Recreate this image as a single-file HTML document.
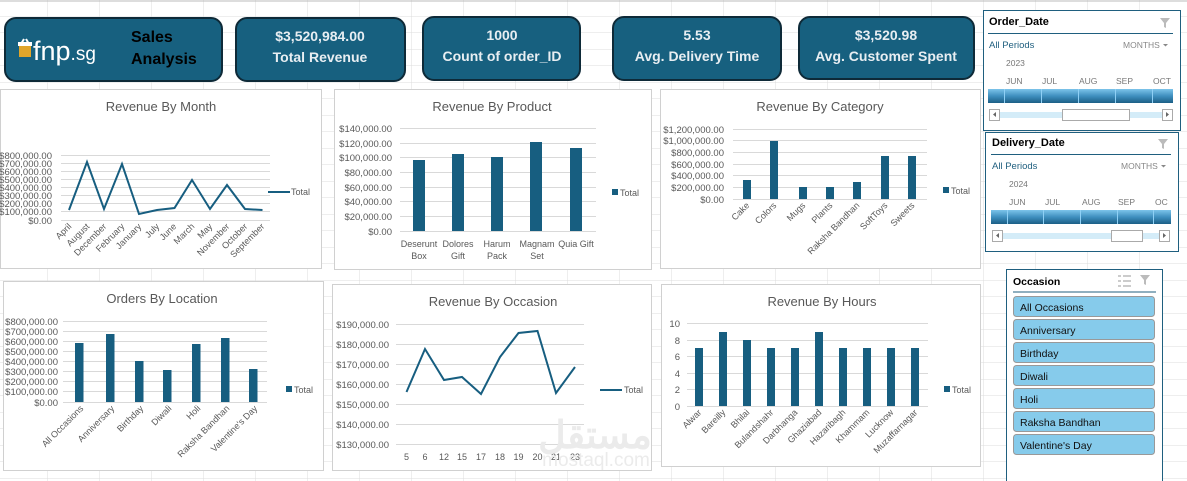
<!DOCTYPE html>
<html><head><meta charset="utf-8"><style>
html,body{margin:0;padding:0;background:#fff}
svg{display:block}
text{font-family:"Liberation Sans",sans-serif}
</style></head><body>
<svg width="1187" height="481" viewBox="0 0 1187 481" xmlns="http://www.w3.org/2000/svg">
<defs>
<pattern id="grid" x="-4" y="0" width="52" height="16.5" patternUnits="userSpaceOnUse">
<path d="M52 0V16.5M0 16.5H52" stroke="#dcdcdc" stroke-width="1" fill="none"/>
</pattern>
<linearGradient id="tl" x1="0" y1="0" x2="0" y2="1">
<stop offset="0" stop-color="#7cc4ea"/><stop offset="0.5" stop-color="#3f8fbf"/><stop offset="1" stop-color="#1c5f86"/>
</linearGradient>
</defs>
<rect width="1187" height="481" fill="#fff"/>
<rect width="1187" height="481" fill="url(#grid)"/>
<line x1="0" y1="1" x2="1187" y2="1" stroke="#bbb"/>

<g stroke="#0e2a38" stroke-width="2" fill="#17607f">
<rect x="5" y="18" width="217" height="63" rx="11"/>
<rect x="236" y="18" width="169" height="63" rx="11"/>
<rect x="423" y="17" width="157" height="63" rx="11"/>
<rect x="613" y="17" width="168" height="63" rx="11"/>
<rect x="799" y="17" width="175" height="62" rx="11"/>
</g>
<rect x="19" y="45" width="12" height="12" fill="#e0a52a"/>
<path d="M21 44l3-5M29 44l-3-5" stroke="#fff" stroke-width="2"/>
<rect x="18" y="42" width="14" height="4" fill="#fff"/>
<text x="33" y="60" font-size="27" fill="#fff" font-family="Liberation Sans">fnp<tspan font-size="19">.sg</tspan></text>
<text x="131" y="42" font-size="16" font-weight="bold" fill="#000" font-family="DejaVu Sans,sans-serif">Sales</text>
<text x="131" y="64" font-size="16" font-weight="bold" fill="#000" font-family="DejaVu Sans,sans-serif">Analysis</text>
<g fill="#e8eef2" font-weight="bold" font-size="14" text-anchor="middle">
<text x="320" y="41">$3,520,984.00</text><text x="320" y="62">Total Revenue</text>
<text x="502" y="40">1000</text><text x="502" y="61">Count of order_ID</text>
<text x="697" y="40">5.53</text><text x="697" y="61">Avg. Delivery Time</text>
<text x="886" y="40">$3,520.98</text><text x="886" y="61">Avg. Customer Spent</text>
</g>

<g fill="#fff" stroke="#d0d0d0">
<rect x="0.5" y="89.5" width="321" height="179"/>
<rect x="334.5" y="89.5" width="317" height="180"/>
<rect x="660.5" y="89.5" width="320" height="179"/>
<rect x="3.5" y="281.5" width="320" height="189"/>
<rect x="332.5" y="284.5" width="319" height="186"/>
<rect x="661.5" y="284.5" width="319" height="182"/>
</g>
<g fill="#595959" font-size="13" text-anchor="middle">
<text x="161" y="111">Revenue By Month</text>
<text x="492" y="111">Revenue By Product</text>
<text x="820" y="111">Revenue By Category</text>
<text x="162" y="303">Orders By Location</text>
<text x="493" y="306">Revenue By Occasion</text>
<text x="822" y="306">Revenue By Hours</text>
</g>

<g stroke="#d9d9d9">
<path d="M61 155.5H270M61 163.5H270M61 171.5H270M61 179.5H270M61 187.5H270M61 195.5H270M61 203.5H270M61 211.5H270M61 220.5H270"/>
</g>
<g fill="#595959" font-size="9.5" text-anchor="end">
<text x="52" y="159">$800,000.00</text><text x="52" y="167">$700,000.00</text><text x="52" y="175">$600,000.00</text><text x="52" y="183">$500,000.00</text><text x="52" y="191">$400,000.00</text><text x="52" y="199">$300,000.00</text><text x="52" y="207">$200,000.00</text><text x="52" y="215">$100,000.00</text><text x="52" y="224">$0.00</text>
</g>
<polyline fill="none" stroke="#175e80" stroke-width="2" points="69,210 87,162 104,209 122,164 139,214 157,210 174.5,208 192,180 210,209 227,185 245,209 262.5,210"/>
<line x1="268" y1="192" x2="290" y2="192" stroke="#175e80" stroke-width="2"/>
<text x="291" y="195" font-size="9" fill="#595959">Total</text>
<g fill="#595959" font-size="9" text-anchor="end">
<text transform="translate(72,227) rotate(-45)">April</text>
<text transform="translate(90,227) rotate(-45)">August</text>
<text transform="translate(107,227) rotate(-45)">December</text>
<text transform="translate(125,227) rotate(-45)">February</text>
<text transform="translate(142,227) rotate(-45)">January</text>
<text transform="translate(160,227) rotate(-45)">July</text>
<text transform="translate(177,227) rotate(-45)">June</text>
<text transform="translate(195,227) rotate(-45)">March</text>
<text transform="translate(213,227) rotate(-45)">May</text>
<text transform="translate(230,227) rotate(-45)">November</text>
<text transform="translate(248,227) rotate(-45)">October</text>
<text transform="translate(265,227) rotate(-45)">September</text>
</g>

<g stroke="#d9d9d9">
<path d="M400 128.5H596M400 143.5H596M400 157.5H596M400 172.5H596M400 187.5H596M400 201.5H596M400 216.5H596M400 231.5H596"/>
</g>
<g fill="#595959" font-size="9.5" text-anchor="end">
<text x="392" y="132">$140,000.00</text><text x="392" y="147">$120,000.00</text><text x="392" y="161">$100,000.00</text><text x="392" y="176">$80,000.00</text><text x="392" y="191">$60,000.00</text><text x="392" y="205">$40,000.00</text><text x="392" y="220">$20,000.00</text><text x="392" y="235">$0.00</text>
</g>
<g fill="#175e80">
<rect x="413" y="160" width="12" height="71"/>
<rect x="452" y="154" width="12" height="77"/>
<rect x="491" y="157" width="12" height="74"/>
<rect x="530" y="142" width="12" height="89"/>
<rect x="570" y="148" width="12" height="83"/>
<rect x="612" y="189" width="6" height="6"/>
</g>
<text x="620" y="196" font-size="9" fill="#595959">Total</text>
<g fill="#595959" font-size="9" text-anchor="middle">
<text x="419" y="247">Deserunt</text><text x="419" y="259">Box</text>
<text x="458" y="247">Dolores</text><text x="458" y="259">Gift</text>
<text x="497" y="247">Harum</text><text x="497" y="259">Pack</text>
<text x="537" y="247">Magnam</text><text x="537" y="259">Set</text>
<text x="576" y="247">Quia Gift</text>
</g>

<g stroke="#d9d9d9">
<path d="M733 129.5H927M733 140.5H927M733 152.5H927M733 164.5H927M733 175.5H927M733 187.5H927M733 199.5H927"/>
</g>
<g fill="#595959" font-size="9.5" text-anchor="end">
<text x="724" y="133">$1,200,000.00</text><text x="724" y="144">$1,000,000.00</text><text x="724" y="156">$800,000.00</text><text x="724" y="168">$600,000.00</text><text x="724" y="179">$400,000.00</text><text x="724" y="191">$200,000.00</text><text x="724" y="203">$0.00</text>
</g>
<g fill="#175e80">
<rect x="743" y="180" width="8" height="19"/>
<rect x="770" y="141" width="8" height="58"/>
<rect x="799" y="187" width="8" height="12"/>
<rect x="826" y="187" width="8" height="12"/>
<rect x="853" y="182" width="8" height="17"/>
<rect x="881" y="156" width="8" height="43"/>
<rect x="908" y="156" width="8" height="43"/>
<rect x="943" y="187" width="6" height="6"/>
</g>
<text x="951" y="194" font-size="9" fill="#595959">Total</text>
<g fill="#595959" font-size="9" text-anchor="end">
<text transform="translate(750,206) rotate(-45)">Cake</text>
<text transform="translate(777,206) rotate(-45)">Colors</text>
<text transform="translate(806,206) rotate(-45)">Mugs</text>
<text transform="translate(833,206) rotate(-45)">Plants</text>
<text transform="translate(860,206) rotate(-45)">Raksha Bandhan</text>
<text transform="translate(888,206) rotate(-45)">SoftToys</text>
<text transform="translate(915,206) rotate(-45)">Sweets</text>
</g>

<g stroke="#d9d9d9">
<path d="M63 321.5H267M63 331.5H267M63 341.5H267M63 351.5H267M63 361.5H267M63 371.5H267M63 381.5H267M63 391.5H267M63 402.5H267"/>
</g>
<g fill="#595959" font-size="9.5" text-anchor="end">
<text x="58" y="325">$800,000.00</text><text x="58" y="335">$700,000.00</text><text x="58" y="345">$600,000.00</text><text x="58" y="355">$500,000.00</text><text x="58" y="365">$400,000.00</text><text x="58" y="375">$300,000.00</text><text x="58" y="385">$200,000.00</text><text x="58" y="395">$100,000.00</text><text x="58" y="406">$0.00</text>
</g>
<g fill="#175e80">
<rect x="75" y="343" width="8.5" height="59"/>
<rect x="106" y="334" width="8.5" height="68"/>
<rect x="135" y="361" width="8.5" height="41"/>
<rect x="163" y="370" width="8.5" height="32"/>
<rect x="192" y="344" width="8.5" height="58"/>
<rect x="221" y="338" width="8.5" height="64"/>
<rect x="249" y="369" width="8.5" height="33"/>
<rect x="286" y="386" width="6" height="6"/>
</g>
<text x="294" y="393" font-size="9" fill="#595959">Total</text>
<g fill="#595959" font-size="9" text-anchor="end">
<text transform="translate(84,409) rotate(-45)">All Occasions</text>
<text transform="translate(115,409) rotate(-45)">Anniversary</text>
<text transform="translate(144,409) rotate(-45)">Birthday</text>
<text transform="translate(172,409) rotate(-45)">Diwali</text>
<text transform="translate(201,409) rotate(-45)">Holi</text>
<text transform="translate(230,409) rotate(-45)">Raksha Bandhan</text>
<text transform="translate(258,409) rotate(-45)">Valentine's Day</text>
</g>

<g stroke="#d9d9d9">
<path d="M396 324.5H584M396 344.5H584M396 364.5H584M396 384.5H584M396 404.5H584M396 424.5H584M396 444.5H584"/>
</g>
<g fill="#595959" font-size="9.5" text-anchor="end">
<text x="389" y="328">$190,000.00</text><text x="389" y="348">$180,000.00</text><text x="389" y="368">$170,000.00</text><text x="389" y="388">$160,000.00</text><text x="389" y="408">$150,000.00</text><text x="389" y="428">$140,000.00</text><text x="389" y="448">$130,000.00</text>
</g>
<polyline fill="none" stroke="#175e80" stroke-width="2" points="406.5,392 425,349 444,380 462,377 481,394 500,357 518.5,333 537.5,331 556,393 575,367"/>
<line x1="600" y1="390" x2="622" y2="390" stroke="#175e80" stroke-width="2"/>
<text x="624" y="393" font-size="9" fill="#595959">Total</text>
<g fill="#595959" font-size="9" text-anchor="middle">
<text x="406.5" y="460">5</text><text x="425" y="460">6</text><text x="444" y="460">12</text><text x="462" y="460">15</text><text x="481" y="460">17</text><text x="500" y="460">18</text><text x="518.5" y="460">19</text><text x="537.5" y="460">20</text><text x="556" y="460">21</text><text x="575" y="460">23</text>
</g>

<g stroke="#d9d9d9">
<path d="M687 323.5H928M687 340.5H928M687 356.5H928M687 373.5H928M687 389.5H928M687 406.5H928"/>
</g>
<g fill="#595959" font-size="9.5" text-anchor="end">
<text x="680" y="327">10</text><text x="680" y="344">8</text><text x="680" y="360">6</text><text x="680" y="377">4</text><text x="680" y="393">2</text><text x="680" y="410">0</text>
</g>
<g fill="#175e80">
<rect x="695" y="348" width="8" height="58"/>
<rect x="719" y="332" width="8" height="74"/>
<rect x="743" y="340" width="8" height="66"/>
<rect x="767" y="348" width="8" height="58"/>
<rect x="791" y="348" width="8" height="58"/>
<rect x="815" y="332" width="8" height="74"/>
<rect x="839" y="348" width="8" height="58"/>
<rect x="863" y="348" width="8" height="58"/>
<rect x="887" y="348" width="8" height="58"/>
<rect x="911" y="348" width="8" height="58"/>
<rect x="944" y="386" width="6" height="6"/>
</g>
<text x="952" y="393" font-size="9" fill="#595959">Total</text>
<g fill="#595959" font-size="9" text-anchor="end">
<text transform="translate(702,413) rotate(-45)">Alwar</text>
<text transform="translate(726,413) rotate(-45)">Bareilly</text>
<text transform="translate(750,413) rotate(-45)">Bhilai</text>
<text transform="translate(774,413) rotate(-45)">Bulandshahr</text>
<text transform="translate(798,413) rotate(-45)">Darbhanga</text>
<text transform="translate(822,413) rotate(-45)">Ghaziabad</text>
<text transform="translate(846,413) rotate(-45)">Hazaribagh</text>
<text transform="translate(870,413) rotate(-45)">Khammam</text>
<text transform="translate(894,413) rotate(-45)">Lucknow</text>
<text transform="translate(918,413) rotate(-45)">Muzaffarnagar</text>
</g>

<text x="595" y="448" font-size="38" font-weight="bold" fill="#ebebeb" text-anchor="middle" font-family="DejaVu Sans,sans-serif">مستقل</text>
<text x="596" y="466" font-size="19" fill="#ebebeb" text-anchor="middle">mostaql.com</text>

<rect x="983.5" y="10.5" width="197" height="120" fill="#fff" stroke="#1f5f7f"/>
<text x="989" y="25" font-size="11" font-weight="bold" fill="#000">Order_Date</text>
<path d="M1160 18h10l-4 5v5l-2-1v-4z" fill="#bbb"/>
<line x1="988" y1="33.5" x2="1173" y2="33.5" stroke="#1f5f7f"/>
<text x="989" y="48" font-size="9.5" fill="#1f5f7f">All Periods</text>
<text x="1123" y="48" font-size="8.5" fill="#888">MONTHS</text>
<path d="M1163 44h5l-2.5 2.5z" fill="#888"/>
<text x="1006" y="66" font-size="8.5" fill="#777">2023</text>
<g font-size="8.5" fill="#777"><text x="1006" y="84">JUN</text><text x="1042" y="84">JUL</text><text x="1079" y="84">AUG</text><text x="1116" y="84">SEP</text><text x="1153" y="84">OCT</text></g>
<rect x="988" y="89" width="185" height="14" fill="url(#tl)"/>
<path d="M1004.5 89v14M1041.5 89v14M1078.5 89v14M1115.5 89v14M1152.5 89v14" stroke="#8fd0f5"/>
<rect x="1000" y="112" width="162" height="6" fill="#d4ecf8"/>
<rect x="989.5" y="109.5" width="10" height="11" fill="#fff" stroke="#aaa"/>
<rect x="1162.5" y="109.5" width="10" height="11" fill="#fff" stroke="#aaa"/>
<path d="M996 112v5l-3-2.5z M1166 112v5l3-2.5z" fill="#666"/>
<rect x="1062.5" y="109.5" width="67" height="11" fill="#fff" stroke="#aaa"/>

<rect x="985.5" y="132.5" width="193" height="119" fill="#fff" stroke="#1f5f7f"/>
<text x="992" y="146" font-size="11" font-weight="bold" fill="#000">Delivery_Date</text>
<path d="M1158 139h10l-4 5v5l-2-1v-4z" fill="#bbb"/>
<line x1="991" y1="154.5" x2="1171" y2="154.5" stroke="#1f5f7f"/>
<text x="992" y="169" font-size="9.5" fill="#1f5f7f">All Periods</text>
<text x="1121" y="169" font-size="8.5" fill="#888">MONTHS</text>
<path d="M1161 165h5l-2.5 2.5z" fill="#888"/>
<text x="1009" y="187" font-size="8.5" fill="#777">2024</text>
<g font-size="8.5" fill="#777"><text x="1009" y="205">JUN</text><text x="1045" y="205">JUL</text><text x="1082" y="205">AUG</text><text x="1118" y="205">SEP</text><text x="1155" y="205">OC</text></g>
<rect x="991" y="210" width="180" height="14" fill="url(#tl)"/>
<path d="M1007.5 210v14M1043.5 210v14M1080.5 210v14M1117.5 210v14M1153.5 210v14" stroke="#8fd0f5"/>
<rect x="1003" y="233" width="156" height="6" fill="#d4ecf8"/>
<rect x="992.5" y="230.5" width="10" height="11" fill="#fff" stroke="#aaa"/>
<rect x="1159.5" y="230.5" width="10" height="11" fill="#fff" stroke="#aaa"/>
<path d="M999 233v5l-3-2.5z M1163 233v5l3-2.5z" fill="#666"/>
<rect x="1111.5" y="230.5" width="31" height="11" fill="#fff" stroke="#aaa"/>

<rect x="1006.5" y="269.5" width="156" height="215" fill="#fff" stroke="#1f5f7f"/>
<text x="1013" y="285" font-size="10.5" font-weight="bold" fill="#000">Occasion</text>
<path d="M1118 276h3M1118 281h3M1118 286h3M1123 276h8M1123 281h8M1123 286h8" stroke="#999"/>
<path d="M1140 275h10l-4 5v5l-2-1v-4z" fill="#bbb"/>
<line x1="1013" y1="292" x2="1156" y2="292" stroke="#1f5f7f"/>
<g fill="#86cbeb" stroke="#999">
<rect x="1013.5" y="296.5" width="141" height="20" rx="3"/>
<rect x="1013.5" y="319.5" width="141" height="20" rx="3"/>
<rect x="1013.5" y="342.5" width="141" height="20" rx="3"/>
<rect x="1013.5" y="365.5" width="141" height="20" rx="3"/>
<rect x="1013.5" y="388.5" width="141" height="20" rx="3"/>
<rect x="1013.5" y="411.5" width="141" height="20" rx="3"/>
<rect x="1013.5" y="434.5" width="141" height="20" rx="3"/>
</g>
<g font-size="10.5" fill="#111">
<text x="1020" y="311">All Occasions</text>
<text x="1020" y="334">Anniversary</text>
<text x="1020" y="357">Birthday</text>
<text x="1020" y="380">Diwali</text>
<text x="1020" y="403">Holi</text>
<text x="1020" y="426">Raksha Bandhan</text>
<text x="1020" y="449">Valentine's Day</text>
</g>
</svg>
</body></html>
